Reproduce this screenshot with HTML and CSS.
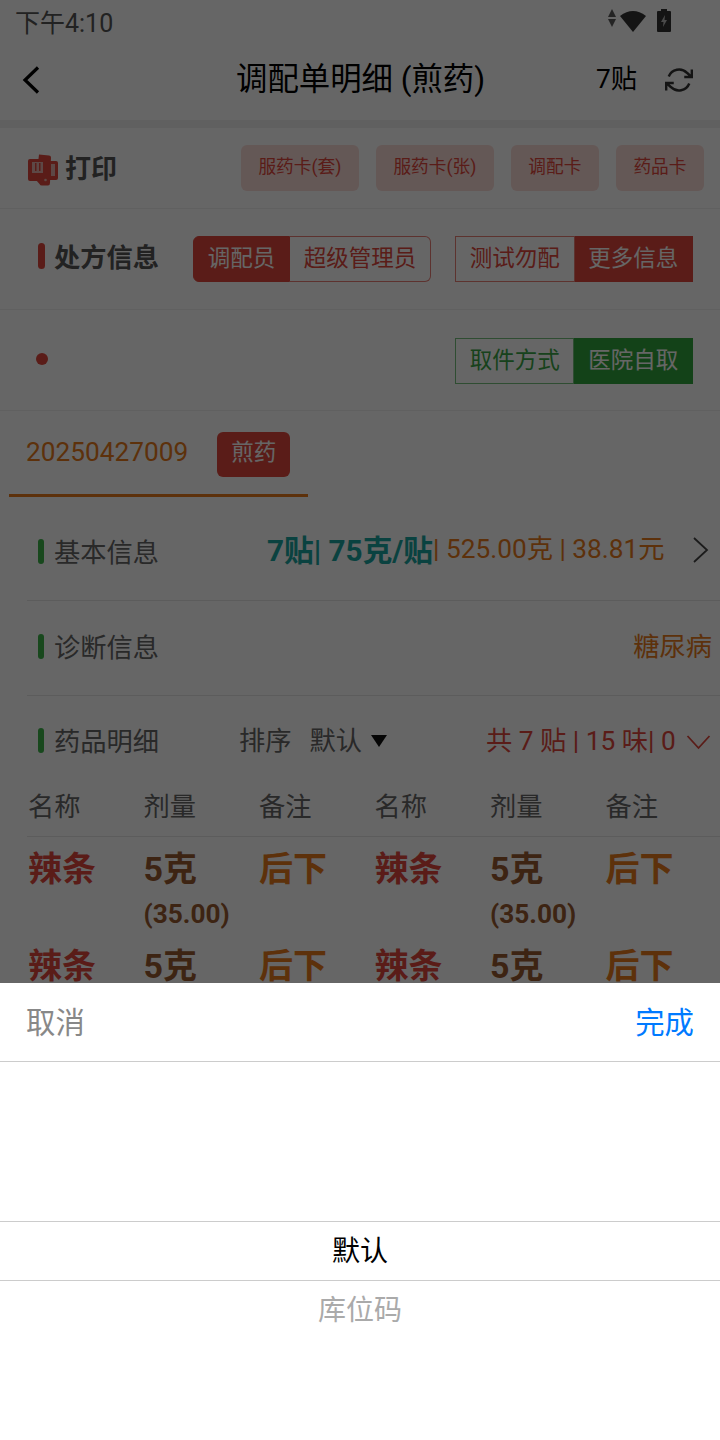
FILE: index.html
```html
<!DOCTYPE html>
<html lang="zh-CN">
<head>
<meta charset="utf-8">
<title>调配单明细</title>
<link rel="stylesheet" href="styles.css">
</head>
<body>
<div class="page">
  <div class="status">
    <span class="time">下午4:10</span>
    <div class="status-icons">
      <svg class="ic-data" viewBox="0 0 8 18"><path d="M4 0l4 8H0zM4 18l-4-8h8z"/></svg>
      <svg class="ic-wifi" viewBox="0 0 26 22"><path d="M0 6Q13-4 26 6L13 22z"/></svg>
      <svg class="ic-batt" viewBox="0 0 14 23"><path d="M4 0h6v2h3q1 0 1 1v19q0 1-1 1H1q-1 0-1-1V3q0-1 1-1h3z"/><path class="bolt" d="M8 6L4 13h2.500L6 18l4-7H7.500z"/></svg>
    </div>
  </div>
  <header class="nav">
    <svg class="ic-back" viewBox="0 0 18 28"><path d="M16 1.500L3 14l13 12.500"/></svg>
    <h1 class="title">调配单明细 (煎药)</h1>
    <span class="count">7贴</span>
    <svg class="ic-refresh" viewBox="0 0 24 24"><path d="M23 3v6.500h-6.500M1 21v-6.500h6.500M3.200 9a9.500 9.500 0 0 1 15.600-3.200L23 9.500M1 14.500l4.200 3.700A9.500 9.500 0 0 0 20.800 15"/></svg>
  </header>
  <div class="band"></div>

  <section class="print-row">
    <div class="print-title">
      <svg class="ic-print" viewBox="0 0 32 32">
        <path d="M20 7h9q2 0 2 2v15q0 2-2 2h-9z"/>
        <path class="hole" d="M24 10h4v12h-4z"/>
        <path d="M3 5h16v22H3q-2 0-2-2V7q0-2 2-2z"/>
        <path d="M12 .500l10 1q2 .200 2 2L23 29q-.100 2.500-2 2.500l-6 0q-2 0-2.500-1.500L9 26z"/>
        <path class="hole" d="M5 8h11v11H5z"/>
        <path d="M8 9h1.500v8H8zM12 9h1.500v8H12z"/>
        <circle class="hole" cx="18.500" cy="26" r="1.300"/>
      </svg>
      <span class="print-label">打印</span>
    </div>
    <div class="print-btns">
      <span class="pbtn">服药卡(套)</span>
      <span class="pbtn">服药卡(张)</span>
      <span class="pbtn">调配卡</span>
      <span class="pbtn">药品卡</span>
    </div>
  </section>

  <section class="info-row">
    <div class="mark-title"><i class="bar red"></i><b>处方信息</b></div>
    <div class="pair round red-pair"><span class="on">调配员</span><span>超级管理员</span></div>
    <div class="pair red-pair"><span>测试勿配</span><span class="on">更多信息</span></div>
  </section>

  <section class="info-row end">
    <i class="dot"></i>
    <div class="pair green-pair"><span>取件方式</span><span class="on">医院自取</span></div>
  </section>

  <section class="tabs">
    <div class="tab">
      <span class="tab-no">20250427009</span>
      <span class="tag">煎药</span>
    </div>
  </section>

  <section class="detail">
    <div class="line l1">
      <i class="bar green"></i><span class="label">基本信息</span>
      <div class="summary"><b class="teal">7贴| 75克/贴</b><span class="orange sum-rest">| 525.00克 | 38.81元</span></div>
      <svg class="ic-chev" viewBox="0 0 18 28"><path d="M2 2l13 12L2 26"/></svg>
    </div>
    <div class="line l2">
      <i class="bar green"></i><span class="label">诊断信息</span>
      <span class="diag orange">糖尿病</span>
    </div>
    <div class="line l3">
      <i class="bar green"></i><span class="label">药品明细</span>
      <div class="sort"><span>排序</span><span>默认</span><i class="tri"></i></div>
      <span class="total">共 7 贴 | 15 味| 0</span>
      <svg class="ic-down" viewBox="0 0 24 16"><path d="M1 2l11 12L23 2"/></svg>
    </div>
    <div class="grid head">
      <span>名称</span><span>剂量</span><span>备注</span><span>名称</span><span>剂量</span><span>备注</span>
    </div>
    <div class="grid meds">
      <b class="n">辣条</b><b class="d">5克<small>(35.00)</small></b><b class="r">后下</b>
      <b class="n">辣条</b><b class="d">5克<small>(35.00)</small></b><b class="r">后下</b>
      <b class="n">辣条</b><b class="d">5克<small>(35.00)</small></b><b class="r">后下</b>
      <b class="n">辣条</b><b class="d">5克<small>(35.00)</small></b><b class="r">后下</b>
    </div>
  </section>
</div>

<div class="mask"></div>
<div class="sheet">
  <div class="sheet-head"><span class="cancel">取消</span><span class="done">完成</span></div>
  <div class="picker">
    <div class="pick sel">默认</div>
    <div class="pick">库位码</div>
  </div>
</div>
</body>
</html>
```
FILE: styles.css
```css
* { box-sizing: border-box; }
html, body { margin: 0; height: 1440px; overflow: hidden; background: #fff; }
body { font-family: Roboto, "Noto Sans CJK SC", sans-serif; color: #333; position: relative; }
svg { display: block; flex: none; }
b { font-weight: 700; }
h1 { margin: 0; font-weight: 400; }

.page { height: 1440px; overflow: hidden; }

.status { height: 42px; display: flex; align-items: center; justify-content: space-between; padding: 0 49px 0 15px; color: #555; }
.time { font-size: 25px; line-height: 42px; margin-top: 5px; }
.status-icons { display: flex; align-items: center; gap: 4px; margin-top: -1px; }
.status-icons svg { fill: #333; }
.ic-data { width: 8px; height: 18px; margin-top: -5px; opacity: .8; }
.ic-wifi { width: 26px; height: 22px; }
.ic-batt { width: 14px; height: 23px; margin-left: 7px; }
.status-icons .bolt { fill: #bbb; }

.nav { height: 78px; display: flex; align-items: center; position: relative; padding: 0 27px 0 22px; color: #000; }
.ic-back { width: 18px; height: 28px; margin-top: -2px; fill: none; stroke: #000; stroke-width: 3.2; }
.title { font-size: 31.400px; position: absolute; left: 236px; top: 15px; line-height: 46px; white-space: nowrap; }
.count { margin-left: auto; font-size: 26.250px; margin-right: 28px; margin-top: -8px; }
.ic-refresh { width: 28px; height: 28px; fill: none; stroke: #333; stroke-width: 2.100; margin-top: -2px; }
.band { height: 8px; background: #f0f0f0; }

.print-row { height: 81px; display: flex; align-items: center; justify-content: space-between; padding: 0 16px 0 27px; border-bottom: 1px solid #f0f0f0; }
.print-title { display: flex; align-items: center; gap: 6px; font-size: 26px; font-weight: 700; color: #555; }
.print-label { margin-top: -4px; }
.ic-print { width: 32px; height: 32px; margin-top: 3px; fill: #e0483c; }
.ic-print .hole { fill: #e8b4ae; }
.print-btns { display: flex; gap: 17px; }
.pbtn { height: 46px; padding: 0 17.500px; line-height: 44px; font-size: 17.700px; white-space: nowrap; color: #e0483c; background: #fbdcd8; border-radius: 6px; }

.info-row { height: 101px; display: flex; align-items: center; padding: 0 0 1px 38px; border-bottom: 1px solid #f0f0f0; }
.info-row.end { justify-content: space-between; padding: 2px 27px 0 36px; }
.mark-title { display: flex; flex: none; align-items: center; gap: 9px; font-size: 26.250px; width: 155px; color: #555; margin-top: -5px; }
.bar { display: block; flex: none; width: 7px; height: 26px; border-radius: 4px; }
.bar.red { background: #e0483c; }
.bar.green { width: 6px; background: #3cb54a; height: 25px; }
.pair { display: flex; flex: none; height: 46px; font-size: 22.500px; line-height: 42px; white-space: nowrap; }
.pair span { padding: 0 13.750px; border: 1px solid; }
.pair span + span { border-left: 0; }
.red-pair span { color: #e0483c; border-color: rgba(224, 72, 60, .7); }
.red-pair .on { color: #fff; background: #e0483c; border-color: #e0483c; }
.green-pair span { color: #3aa547; border-color: rgba(58, 165, 71, .7); }
.green-pair .on { color: #fff; background: #31a63e; border-color: #31a63e; }
.round { margin-right: 24px; }
.round span:first-child { border-radius: 6px 0 0 6px; }
.round span:last-child { border-radius: 0 6px 6px 0; }
.dot { display: block; width: 12px; height: 12px; border-radius: 50%; background: #e0483c; margin-top: -4px; }

.tabs { height: 87px; padding-left: 9px; }
.tab { width: 299px; height: 86px; display: flex; align-items: center; padding: 0 0 4px 17px; border-bottom: 3px solid #e87b1c; gap: 29px; }
.tab-no { font-size: 26.250px; color: #e87b1c; margin-top: 2px; }
.tag { height: 45px; line-height: 41px; padding: 0 14px; font-size: 22.500px; color: #fff; background: #e0483c; border-radius: 6px; margin-top: 7px; }

.detail { padding-left: 27px; }
.line { display: flex; align-items: center; padding-left: 11px; border-bottom: 1px solid #e6e6e6; position: relative; }
.l1 { height: 103px; padding-top: 4px; }
.l2 { height: 95px; padding-bottom: 4px; }
.l3 { height: 88px; border-bottom: 0; }
.label { font-size: 26.250px; color: #666; margin-left: 10px; }
.summary { position: absolute; left: 240px; top: 31px; white-space: nowrap; font-size: 26.250px; line-height: 44px; display: flex; align-items: center; }
.teal { color: #1aa5a0; font-size: 29.700px; }
.sum-rest { margin-top: -4px; }
.orange { color: #e87b1c; }
.ic-chev { position: absolute; left: 665px; top: 38px; width: 18px; height: 28px; fill: none; stroke: #444; stroke-width: 1.800; }
.diag { margin-left: auto; font-size: 26.250px; padding-right: 8px; margin-top: -3px; }
.sort { position: absolute; left: 212px; top: 23px; display: flex; align-items: center; gap: 18px; font-size: 26.250px; line-height: 44px; color: #666; }
.tri { display: block; width: 0; height: 0; border: 8.500px solid transparent; border-top: 12px solid #111; border-bottom: 0; margin-left: -9px; }
.total { position: absolute; left: 459px; top: 23px; font-size: 26.250px; line-height: 44px; color: #e0483c; white-space: nowrap; }
.ic-down { position: absolute; left: 659px; top: 38px; width: 25px; height: 16px; fill: none; stroke: #e0483c; stroke-width: 1.800; }

.grid { display: grid; grid-template-columns: repeat(6, 115.500px); padding-left: 1px; }
.head { font-size: 26.250px; line-height: 46px; color: #666; height: 53px; border-bottom: 1px solid #e6e6e6; align-items: start; }
.meds { font-size: 34px; line-height: 46px; padding-top: 9px; }
.meds b { display: block; height: 97px; }
.n { color: #e0483c; }
.d { color: #9a5a30; }
.r { color: #e87b1c; }
.d small { display: block; font-size: 26.250px; line-height: 44px; }

.mask { position: absolute; inset: 0; background: rgba(0, 0, 0, .6); }
.sheet { position: absolute; left: 0; right: 0; bottom: 0; height: 457px; background: #fff; }
.sheet-head { height: 79px; display: flex; align-items: center; justify-content: space-between; padding: 0 26px 4px; border-bottom: 1px solid #ccc; font-size: 29.400px; }
.cancel { color: #888; }
.done { color: #007aff; }
.picker { padding-top: 159px; }
.pick { height: 60px; line-height: 60px; text-align: center; font-size: 28px; color: #aaa; }
.sel { height: 60px; color: #000; border-top: 1px solid #ccc; border-bottom: 1px solid #ccc; }
```
